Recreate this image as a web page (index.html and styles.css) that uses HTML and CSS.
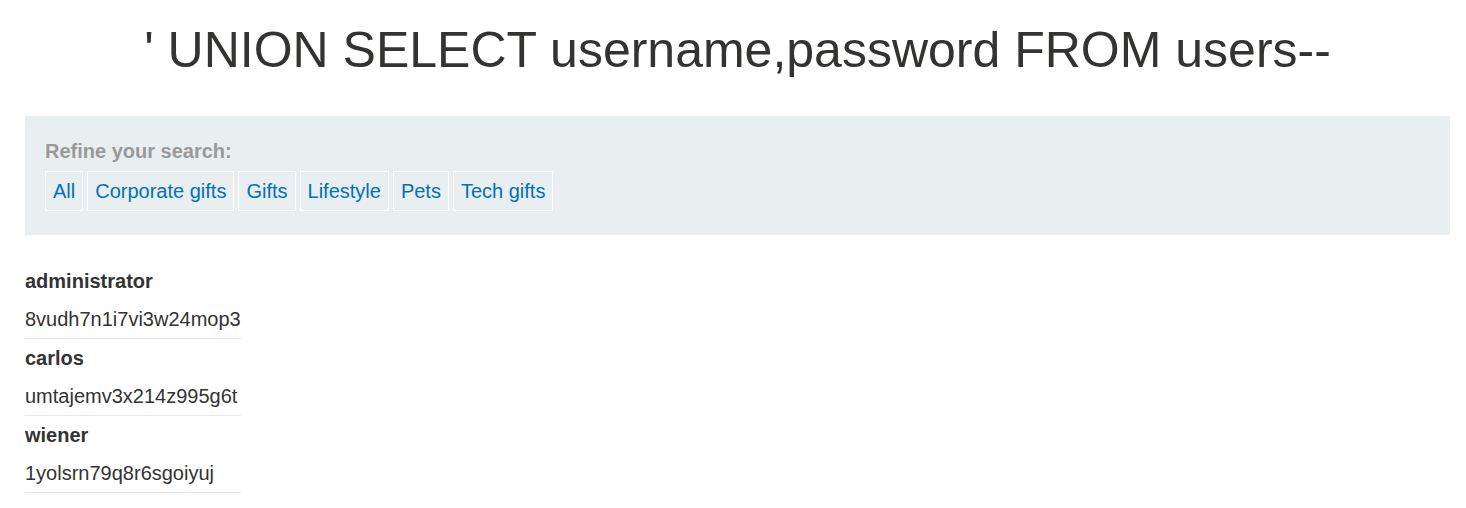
FILE: index.html
```html
<!DOCTYPE html>
<html>
<head>
<meta charset="utf-8">
<link rel="stylesheet" href="styles.css">
</head>
<body>
<div class="page">
  <h1 class="title">' UNION SELECT username,password FROM users--</h1>
  <section class="filter">
    <div class="filter-label">Refine your search:</div>
    <div class="filter-links">
      <a class="filter-link" href="#">All</a>
      <a class="filter-link" href="#">Corporate gifts</a>
      <a class="filter-link" href="#">Gifts</a>
      <a class="filter-link" href="#">Lifestyle</a>
      <a class="filter-link" href="#">Pets</a>
      <a class="filter-link" href="#">Tech gifts</a>
    </div>
  </section>
  <table class="results">
    <tbody>
      <tr><th>administrator</th></tr>
      <tr><td>8vudh7n1i7vi3w24mop3</td></tr>
      <tr><th>carlos</th></tr>
      <tr><td>umtajemv3x214z995g6t</td></tr>
      <tr><th>wiener</th></tr>
      <tr><td>1yolsrn79q8r6sgoiyuj</td></tr>
    </tbody>
  </table>
</div>
</body>
</html>
```
FILE: styles.css
```css
html, body {
  margin: 0;
  padding: 0;
  background: #fff;
}
body {
  font-family: "Liberation Sans", Arial, sans-serif;
  color: #333332;
}
.page {
  padding: 0 16px 0 25px;
}
.title {
  margin: 0;
  padding-top: 20px;
  font-size: 50px;
  line-height: 60px;
  font-weight: normal;
  text-align: center;
  color: #333332;
}
.filter {
  margin-top: 36px;
  background: #e9eef1;
  padding: 20px 20px 24px 20px;
}
.filter-label {
  font-size: 20px;
  font-weight: bold;
  color: #999;
  line-height: 31px;
}
.filter-links {
  display: flex;
  gap: 4px;
  margin-top: 4px;
}
.filter-link {
  display: block;
  border: 1px solid #fff;
  color: #0071bc;
  text-decoration: none;
  font-size: 20px;
  line-height: 38px;
  padding: 0 7px;
}
.results {
  margin-top: 27px;
  border-collapse: collapse;
  font-size: 20px;
}
.results th {
  text-align: left;
  font-weight: bold;
  padding: 0;
  height: 38px;
  vertical-align: middle;
}
.results td {
  padding: 1px 0 0 0;
  height: 37px;
  border-bottom: 1px solid #e6e6e6;
  vertical-align: middle;
}
```
